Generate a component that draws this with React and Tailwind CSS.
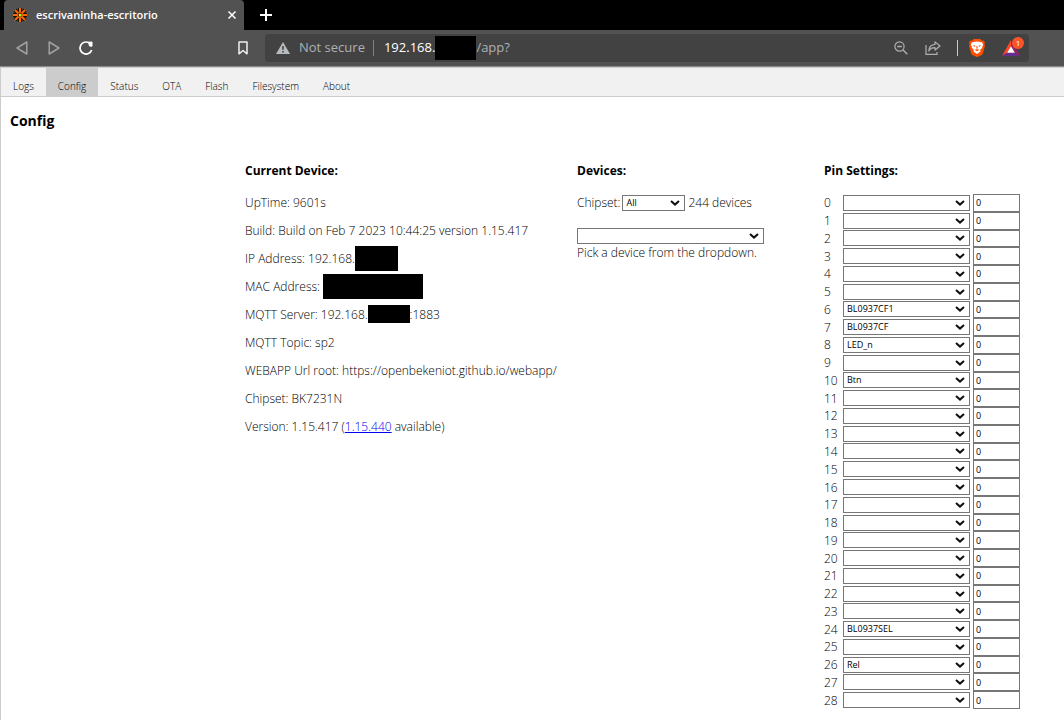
import React, { useState } from 'react';

const TABS = ['Logs', 'Config', 'Status', 'OTA', 'Flash', 'Filesystem', 'About'];

const ROLES = ['', 'Rel', 'Btn', 'LED_n', 'BL0937SEL', 'BL0937CF', 'BL0937CF1'];

const PIN_ROLES = { 6: 'BL0937CF1', 7: 'BL0937CF', 8: 'LED_n', 10: 'Btn', 24: 'BL0937SEL', 26: 'Rel' };

const PINS = Array.from({ length: 29 }, (_, index) => ({ index, role: PIN_ROLES[index] || '', channel: '0' }));

const Redacted = ({ className }) => <span className={`shrink-0 bg-black ${className}`} />;

const Favicon = () => (
  <svg viewBox="0 0 16 16" className="h-4 w-4 shrink-0">
    <g stroke="#1a1000" strokeWidth="4">
      <path d="M8 1v14M1 8h14M3 3l10 10M13 3L3 13" />
    </g>
    <g stroke="#ff6a00" strokeWidth="2">
      <path d="M8 1v14M1 8h14M3 3l10 10M13 3L3 13" />
    </g>
    <circle cx="8" cy="8" r="2.4" fill="#7a3000" />
    <rect x="7" y="7" width="2.4" height="2.4" fill="#9dff1a" />
  </svg>
);

const BraveLion = () => (
  <svg viewBox="0 0 16 18" className="h-[18px] w-4">
    <path d="M4.6 0h6.8l1.5 1.7 1.8-.2 1.3 2-.6 1.6.6 1.7-2 7.2c-.2.8-.6 1.4-1.3 1.9L8.6 17.8a1 1 0 0 1-1.2 0l-4.1-1.9A3.4 3.4 0 0 1 2 14L0 6.8l.6-1.7L0 3.5l1.3-2 1.8.2z" fill="#ff5000" />
    <path d="M3 3.300 8 2.500l5 .8 1.100 2.300-1.100 3.500-1.900 2 .4 1.500L8 15l-3.500-2.400.4-1.500-1.900-2L1.900 5.600z" fill="#fff" />
    <path d="M3.800 6l2.700.8-.8 1.100zM12.200 6l-2.700.8.8 1.100zM7.600 7h.8l.3 2.300-.7.700-.7-.7zM5.500 10.800 8 10.300l2.500.5L8 12.300z" fill="#ff5000" />
  </svg>
);

const BatTriangle = () => (
  <svg viewBox="0 0 18 16" className="h-4 w-[18px]">
    <path d="M9 0 0 16l5.500-3.400L9 6.500z" fill="#ff4724" />
    <path d="M9 0l9 16-5.500-3.400L9 6.500z" fill="#9e1f63" />
    <path d="M0 16h18l-5.500-3.400h-7z" fill="#662d91" />
    <path d="M9 6.200 5.200 12.800h7.600z" fill="#fff" />
  </svg>
);

const Select = ({ label, options, value, onChange, className = '', id }) => (
  <div className={`relative ${className}`}>
    <select
      id={id}
      aria-label={label}
      value={value}
      onChange={(e) => onChange(e.target.value)}
      className="block h-4 w-full appearance-none border border-[#767676] bg-white pl-[3px] pr-4 text-[9px] leading-[14px] font-normal text-black"
    >
      {options.map((option) => (
        <option key={option} value={option}>{option}</option>
      ))}
    </select>
    <svg viewBox="0 0 10 6" className="pointer-events-none absolute right-[5px] top-[5px] h-[6px] w-[10px]">
      <path d="M1 1l4 3.600L9 1" fill="none" stroke="#101010" strokeWidth="2" />
    </svg>
  </div>
);

const BrowserChrome = () => (
  <header className="text-white">
    <div className="flex h-[30px] items-center bg-black pl-1">
      <div className="flex h-full w-60 items-center rounded-t-[4px] bg-[#525252] pl-2 pr-1">
        <Favicon />
        <span className="ml-2 flex-1 text-[11px] font-semibold">escrivaninha-escritorio</span>
        <button aria-label="Close tab" className="flex h-4 w-4 items-center justify-center">
          <svg viewBox="0 0 8 8" className="h-2 w-2">
            <path d="M.5.5l7 7M7.500.5l-7 7" stroke="#fff" strokeWidth="1.500" />
          </svg>
        </button>
      </div>
      <button aria-label="New tab" className="ml-4">
        <svg viewBox="0 0 12 12" className="h-3 w-3">
          <path d="M6 0v12M0 6h12" stroke="#fff" strokeWidth="2" />
        </svg>
      </button>
    </div>

    <div className="flex h-[37px] items-center border-b border-[#8c8c8c] bg-[#525252] pl-4 pr-[35px]">
      <button aria-label="Back">
        <svg viewBox="0 0 12 14" className="h-[14px] w-3">
          <path d="M10.800 1v12L1 7z" fill="none" stroke="#a0a0a0" strokeWidth="1.500" strokeLinejoin="round" />
        </svg>
      </button>
      <button aria-label="Forward" className="ml-5">
        <svg viewBox="0 0 12 14" className="h-[14px] w-3">
          <path d="M1.200 1v12L11 7z" fill="none" stroke="#a0a0a0" strokeWidth="1.500" strokeLinejoin="round" />
        </svg>
      </button>
      <button aria-label="Reload" className="ml-[18px]">
        <svg viewBox="0 0 16 16" className="h-4 w-4">
          <path d="M11 2.800A6 6 0 1 0 13.700 10" fill="none" stroke="#fff" strokeWidth="1.700" />
          <path d="M10.500 2.200 14 2v4.200L11.500 6z" fill="#fff" stroke="#fff" strokeLinejoin="round" />
        </svg>
      </button>
      <button aria-label="Bookmark" className="ml-36">
        <svg viewBox="0 0 10 14" className="h-[14px] w-[10px]">
          <path d="M1 1h8v11.800L5 9.500l-4 3.300z" fill="none" stroke="#f0f0f0" strokeWidth="1.500" strokeLinejoin="round" />
        </svg>
      </button>

      <div className="ml-[17px] flex h-7 min-w-0 flex-1 items-center rounded-[4px] bg-[#424242] pl-[11px] pr-[5px] text-[13px] text-[#aeb1b5]">
        <svg viewBox="0 0 14 12" className="h-3 w-[14px]">
          <path d="M7 0l7 12H0z" fill="#b8bcc0" />
          <path d="M6.200 4h1.600v3.800H6.200zM6.200 9h1.600v1.500H6.200z" fill="#424242" />
        </svg>
        <span className="ml-[9px]">Not secure</span>
        <span className="ml-2 h-4 w-px bg-[#7c7f83]" />
        <span className="ml-[10px] text-white">192.168.</span>
        <Redacted className="h-6 w-[41px]" />
        <span className="flex-1">/app?</span>
        <button aria-label="Zoom out">
          <svg viewBox="0 0 14 14" className="h-[14px] w-[14px]" fill="none" stroke="#b0b0b0">
            <circle cx="5.500" cy="5.500" r="4.600" strokeWidth="1.200" />
            <path d="M3.200 5.500h4.600M9 9l4.300 4.300" strokeWidth="1.400" />
          </svg>
        </button>
        <button aria-label="Share" className="ml-[17px]">
          <svg viewBox="0 0 16 14" className="h-[14px] w-4" fill="none" stroke="#b0b0b0" strokeWidth="1.200">
            <path d="M1 4v9.300h11V11" />
            <path d="M10 .9 15 5l-5 4V6.700C7 6.600 5.200 7.600 3.800 10 4 6.500 6 3.600 10 3.300z" strokeLinejoin="round" />
          </svg>
        </button>
        <span className="ml-4 h-4 w-px bg-[#c8c8c8]" />
        <button aria-label="Brave Shields" className="ml-[11px]">
          <BraveLion />
        </button>
        <button aria-label="Brave Rewards" className="relative ml-[17px] mr-1">
          <BatTriangle />
          <span className="absolute -right-1 -top-[3px] flex h-3 w-3 items-center justify-center rounded-full bg-[#fb542b] text-[8px] text-white">1</span>
        </button>
      </div>
    </div>
  </header>
);

const TabBar = ({ active, onSelect }) => (
  <nav className="flex h-[30px] border-y border-[#ccc] bg-[#f1f1f1] text-[10px] font-[350]">
    {TABS.map((tab) => (
      <button
        key={tab}
        onClick={() => onSelect(tab)}
        className={`px-3 pt-2 ${tab === active ? 'bg-[#ccc]' : 'hover:bg-[#ddd]'}`}
      >
        {tab}
      </button>
    ))}
  </nav>
);

const CurrentDevice = () => (
  <section>
    <h4 className="font-bold">Current Device:</h4>
    <div className="mt-[9px] whitespace-pre *:flex *:h-7 *:items-center">
      <p>UpTime: 9601s</p>
      <p>Build: Build on Feb 7 2023 10:44:25 version 1.15.417</p>
      <p>IP Address: 192.168.<Redacted className="h-[25px] w-[43px]" /></p>
      <p>MAC Address: <Redacted className="h-[25px] w-[100px]" /></p>
      <p>MQTT Server: 192.168.<Redacted className="h-[18px] w-[42px]" />:1883</p>
      <p>MQTT Topic: sp2</p>
      <p>WEBAPP Url root: https://openbekeniot.github.io/webapp/</p>
      <p>Chipset: BK7231N</p>
      <p>Version: 1.15.417 (<a href="#release" className="text-[#0000ee] underline">1.15.440</a> available)</p>
    </div>
  </section>
);

const Devices = () => {
  const [chipset, setChipset] = useState('All');
  const [device, setDevice] = useState('');

  return (
    <section>
      <h4 className="font-bold">Devices:</h4>
      <div className="mt-[15px] flex items-center">
        <label htmlFor="chipset">Chipset:</label>
        <Select id="chipset" options={['All', 'BK7231N', 'BK7231T']} value={chipset} onChange={setChipset} className="ml-[2px] w-[63px]" />
        <span className="ml-[3px]">244 devices</span>
      </div>
      <Select label="Device" options={['']} value={device} onChange={setDevice} className="mt-[17px] w-[187px]" />
      <p>Pick a device from the dropdown.</p>
    </section>
  );
};

const PinSettings = () => {
  const [pins, setPins] = useState(PINS);

  const update = (index, change) => {
    setPins(pins.map((pin) => (pin.index === index ? { ...pin, ...change } : pin)));
  };

  return (
    <section>
      <h4 className="font-bold">Pin Settings:</h4>
      <div className="mt-[15px] grid h-[515px] auto-rows-fr">
        {pins.map((pin) => (
          <div key={pin.index} className="flex min-h-0 items-center">
            <label htmlFor={`pin-${pin.index}`} className="w-[19px]">{pin.index}</label>
            <Select
              id={`pin-${pin.index}`}
              options={ROLES}
              value={pin.role}
              onChange={(role) => update(pin.index, { role })}
              className="w-[127px]"
            />
            <input
              type="text"
              aria-label={`Pin ${pin.index} channel`}
              value={pin.channel}
              onChange={(e) => update(pin.index, { channel: e.target.value })}
              className="ml-[3px] h-full w-[47px] border border-[#767676] bg-white px-[2px] text-[9px] font-normal"
            />
          </div>
        ))}
      </div>
    </section>
  );
};

const App = () => {
  const [activeTab, setActiveTab] = useState('Config');

  return (
    <div className="min-h-screen bg-white font-['Open_Sans','Noto_Sans',sans-serif] text-black">
      <BrowserChrome />
      <div className="border-l border-[#ccc]">
        <TabBar active={activeTab} onSelect={setActiveTab} />
        <main className="pb-3 text-[12px] leading-[17px] font-[350]">
          <h3 className="px-[9px] pt-[14px] text-[14px] leading-5 font-bold">Config</h3>
          <div className="grid grid-cols-[332px_247px_1fr] pl-[244px] pt-[31px]">
            <CurrentDevice />
            <Devices />
            <PinSettings />
          </div>
        </main>
      </div>
    </div>
  );
};

export default App;
